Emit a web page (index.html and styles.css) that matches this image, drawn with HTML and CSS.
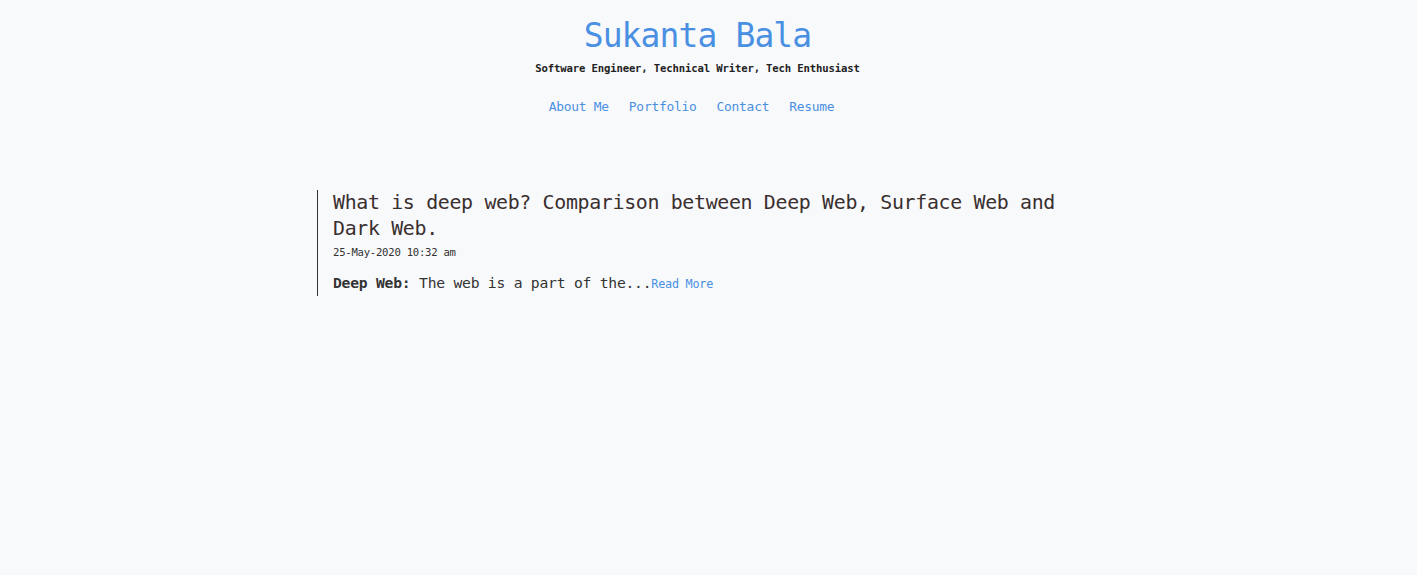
FILE: index.html
```html
<!DOCTYPE html>
<html lang="en">
<head>
<meta charset="utf-8">
<title>Sukanta Bala</title>
<link rel="stylesheet" href="styles.css">
</head>
<body>
<header class="site-header">
  <h1 class="site-title"><a href="#">Sukanta Bala</a></h1>
  <p class="tagline">Software Engineer, Technical Writer, Tech Enthusiast</p>
  <nav class="nav">
    <a href="#">About Me</a>
    <a href="#">Portfolio</a>
    <a href="#">Contact</a>
    <a href="#">Resume</a>
  </nav>
</header>
<main class="posts">
  <article class="post">
    <h2 class="post-title">What is deep web? Comparison between Deep Web, Surface Web and Dark Web.</h2>
    <div class="post-date">25-May-2020 10:32 am</div>
    <p class="post-excerpt"><strong>Deep Web:</strong> The web is a part of the...<a class="read-more" href="#">Read More</a></p>
  </article>
</main>
</body>
</html>
```
FILE: styles.css
```css
html, body {
  margin: 0;
  padding: 0;
}
body {
  background: #f8f9fb;
  color: #333;
  font-family: "DejaVu Sans Mono", "Liberation Mono", monospace;
  letter-spacing: -0.015em;
}
a {
  color: #4a90e2;
  text-decoration: none;
}
.site-header {
  text-align: center;
  padding-top: 16px;
  padding-right: 22px;
}
.site-title {
  margin: 0;
  font-size: 33px;
  font-weight: normal;
  line-height: 40px;
  letter-spacing: -0.9px;
}
.tagline {
  margin: 5px 0 0;
  font-size: 10.6px;
  font-weight: bold;
  line-height: 14px;
  color: #222;
  letter-spacing: -0.14px;
}
.nav {
  display: flex;
  justify-content: center;
  gap: 20px;
  margin-top: 24px;
  padding-right: 12px;
  font-size: 12.9px;
  line-height: 16px;
}
.posts {
  width: 783px;
  margin: 75px auto 0;
}
.post {
  border-left: 1px solid #333;
  padding-left: 15px;
  padding-bottom: 3px;
}
.post-title {
  margin: 0;
  font-size: 19.9px;
  font-weight: normal;
  line-height: 26px;
  color: #3a2f2f;
  letter-spacing: -0.33px;
}
.post-date {
  margin-top: 2px;
  font-size: 10.6px;
  line-height: 16px;
}
.post-excerpt {
  margin: 14px 0 0;
  font-size: 14.7px;
  line-height: 18px;
}
.read-more {
  font-size: 11.8px;
}
```
